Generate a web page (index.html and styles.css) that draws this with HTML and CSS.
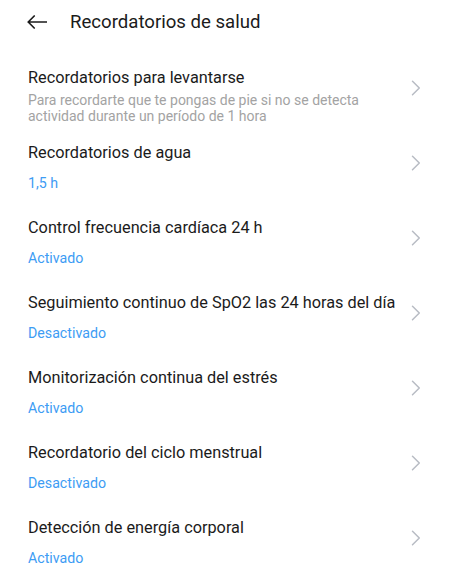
FILE: index.html
```html
<!DOCTYPE html>
<html lang="es">
<head>
<meta charset="utf-8">
<title>Recordatorios de salud</title>
<link rel="stylesheet" href="styles.css">
</head>
<body>
<header class="topbar">
  <svg class="back" width="20" height="14" viewBox="0 0 20 14"><path d="M19.5 7H1.2M7.2 1 1.2 7l6 6" fill="none" stroke="#1b1b1b" stroke-width="1.7" stroke-linecap="round" stroke-linejoin="round"/></svg>
  <h1 class="title">Recordatorios de salud</h1>
</header>
<ul class="list">
  <li class="item">
    <div class="text">
      <div class="name">Recordatorios para levantarse</div>
      <div class="desc">Para recordarte que te pongas de pie si no se detecta actividad durante un período de 1 hora</div>
    </div>
    <svg class="chev" width="10" height="16" viewBox="0 0 10 16"><path d="M1.5 1.2 8.3 8l-6.8 6.8" fill="none" stroke="#b8bcc4" stroke-width="1.5" stroke-linecap="round" stroke-linejoin="round"/></svg>
  </li>
  <li class="item">
    <div class="text">
      <div class="name">Recordatorios de agua</div>
      <div class="value">1,5 h</div>
    </div>
    <svg class="chev" width="10" height="16" viewBox="0 0 10 16"><path d="M1.5 1.2 8.3 8l-6.8 6.8" fill="none" stroke="#b8bcc4" stroke-width="1.5" stroke-linecap="round" stroke-linejoin="round"/></svg>
  </li>
  <li class="item">
    <div class="text">
      <div class="name">Control frecuencia cardíaca 24 h</div>
      <div class="value">Activado</div>
    </div>
    <svg class="chev" width="10" height="16" viewBox="0 0 10 16"><path d="M1.5 1.2 8.3 8l-6.8 6.8" fill="none" stroke="#b8bcc4" stroke-width="1.5" stroke-linecap="round" stroke-linejoin="round"/></svg>
  </li>
  <li class="item">
    <div class="text">
      <div class="name">Seguimiento continuo de SpO2 las 24 horas del día</div>
      <div class="value">Desactivado</div>
    </div>
    <svg class="chev" width="10" height="16" viewBox="0 0 10 16"><path d="M1.5 1.2 8.3 8l-6.8 6.8" fill="none" stroke="#b8bcc4" stroke-width="1.5" stroke-linecap="round" stroke-linejoin="round"/></svg>
  </li>
  <li class="item">
    <div class="text">
      <div class="name">Monitorización continua del estrés</div>
      <div class="value">Activado</div>
    </div>
    <svg class="chev" width="10" height="16" viewBox="0 0 10 16"><path d="M1.5 1.2 8.3 8l-6.8 6.8" fill="none" stroke="#b8bcc4" stroke-width="1.5" stroke-linecap="round" stroke-linejoin="round"/></svg>
  </li>
  <li class="item">
    <div class="text">
      <div class="name">Recordatorio del ciclo menstrual</div>
      <div class="value">Desactivado</div>
    </div>
    <svg class="chev" width="10" height="16" viewBox="0 0 10 16"><path d="M1.5 1.2 8.3 8l-6.8 6.8" fill="none" stroke="#b8bcc4" stroke-width="1.5" stroke-linecap="round" stroke-linejoin="round"/></svg>
  </li>
  <li class="item">
    <div class="text">
      <div class="name">Detección de energía corporal</div>
      <div class="value">Activado</div>
    </div>
    <svg class="chev" width="10" height="16" viewBox="0 0 10 16"><path d="M1.5 1.2 8.3 8l-6.8 6.8" fill="none" stroke="#b8bcc4" stroke-width="1.5" stroke-linecap="round" stroke-linejoin="round"/></svg>
  </li>
</ul>
</body>
</html>
```
FILE: styles.css
```css
html, body {
  margin: 0;
  padding: 0;
  background: #ffffff;
}
body {
  font-family: Roboto, "Noto Sans", sans-serif;
  color: #1b1b1b;
  width: 450px;
}
.topbar {
  display: flex;
  align-items: center;
  height: 44px;
  padding-left: 27px;
}
.back {
  display: block;
  flex: none;
}
.title {
  margin: 0 0 0 23px;
  font-size: 18.6px;
  font-weight: 400;
  line-height: 24px;
  color: #1b1b1b;
}
.list {
  list-style: none;
  margin: 0;
  padding: 6.5px 0 0 0;
}
.item {
  display: flex;
  align-items: center;
  height: 75px;
  padding: 0 29px 0 28px;
  box-sizing: border-box;
}
.text {
  flex: 1;
  align-self: flex-start;
  padding-top: 16.5px;
  min-width: 0;
}
.name {
  font-size: 16.3px;
  line-height: 22px;
  color: #1b1b1b;
}
.desc {
  margin-top: 3px;
  font-size: 14px;
  line-height: 16px;
  color: #a3a3a3;
  max-width: 345px;
}
.value {
  margin-top: 10px;
  font-size: 14.2px;
  line-height: 18px;
  color: #3d9cf4;
}
.chev {
  display: block;
  flex: none;
  margin-left: 8px;
}
```
